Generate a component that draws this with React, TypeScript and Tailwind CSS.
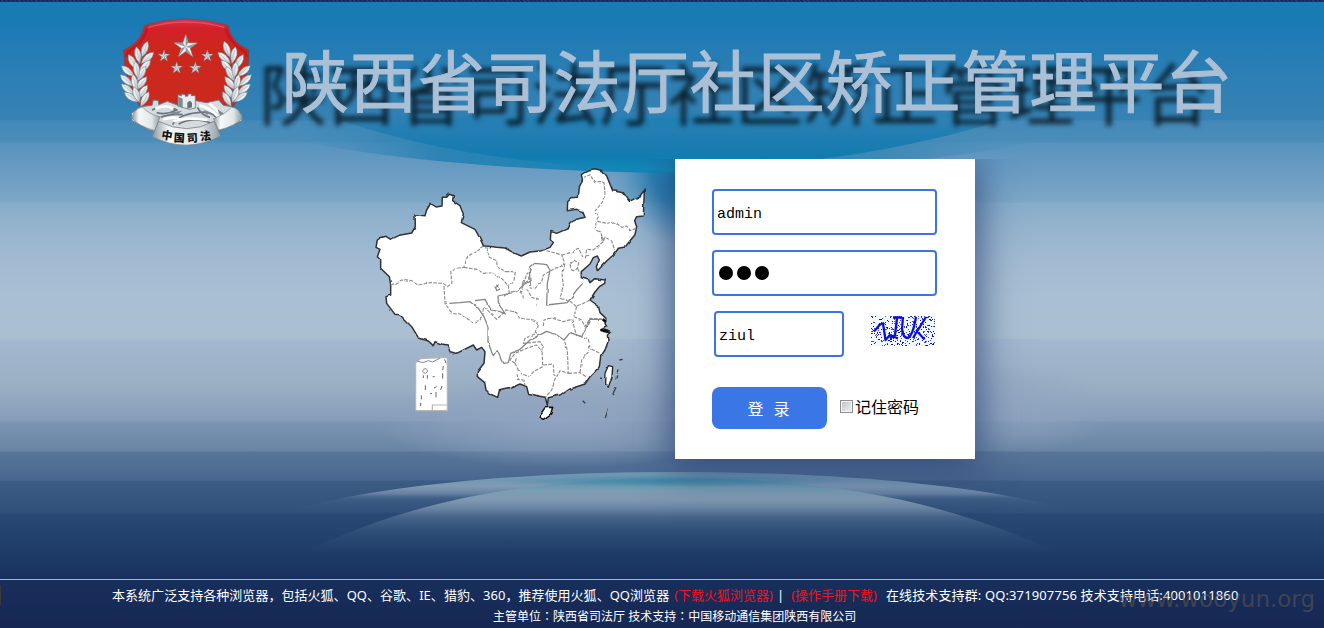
import React from "react";

const STARS = [
  { x: 227, y: 140, r: 38 },
  { x: 162, y: 168, r: 19 },
  { x: 292, y: 168, r: 19 },
  { x: 200, y: 204, r: 19 },
  { x: 256, y: 204, r: 19 },
];

function starPoints(cx: number, cy: number, r: number) {
  const pts: string[] = [];
  for (let i = 0; i < 10; i++) {
    const a = -Math.PI / 2 + (i * Math.PI) / 5;
    const rad = i % 2 ? r * 0.38 : r;
    pts.push(`${(cx + rad * Math.cos(a)).toFixed(1)},${(cy + rad * Math.sin(a)).toFixed(1)}`);
  }
  return pts.join(" ");
}

const LEAVES = [
  [104, 148, 20], [84, 166, -12], [112, 174, 48], [68, 186, -30], [104, 200, 42],
  [54, 214, -50], [94, 222, 30], [50, 242, -48], [94, 250, 40], [54, 268, -52],
  [98, 276, 35], [64, 292, -55], [104, 298, 30], [80, 210, -8], [74, 248, -12], [80, 284, -20],
];

function Wreath() {
  return (
    <g>
      <path d="M100 150 Q66 220 100 318" stroke="#5d6a74" strokeWidth="6" fill="none" />
      {LEAVES.map(([x, y, r], i) => (
        <g key={i} transform={`translate(${x} ${y}) rotate(${r})`}>
          <path d="M0 -26 Q19 -4 0 25 Q-19 -4 0 -26Z" fill="url(#silver)" stroke="#75838c" strokeWidth="1.5" />
          <path d="M0 -16 L1 18" stroke="#a3afb6" strokeWidth="1.5" />
        </g>
      ))}
    </g>
  );
}

function Emblem() {
  return (
    <svg viewBox="0 0 480 480" className="h-[160px] w-[160px] shrink-0">
      <defs>
        <linearGradient id="silver" x1="0" y1="0" x2="1" y2="1">
          <stop offset="0" stopColor="#ffffff" />
          <stop offset=".5" stopColor="#e3e8ea" />
          <stop offset="1" stopColor="#a4b0b7" />
        </linearGradient>
        <linearGradient id="band" x1="0" x2="1" y1="0" y2="0">
          <stop offset="0" stopColor="#8a969d" />
          <stop offset=".25" stopColor="#f6f8f8" />
          <stop offset=".7" stopColor="#e2e6e8" />
          <stop offset="1" stopColor="#909ca3" />
        </linearGradient>
        <linearGradient id="shield" x1="0" x2="0" y1="0" y2="1">
          <stop offset="0" stopColor="#e0354a" />
          <stop offset=".1" stopColor="#d3202b" />
          <stop offset=".3" stopColor="#cd261c" />
          <stop offset="1" stopColor="#cb2a1e" />
        </linearGradient>
      </defs>
      <path
        d="M104 76 Q228 38 354 76 Q362 126 416 150 Q418 250 370 320 L90 320 Q42 240 41 150 Q92 130 104 76Z"
        fill="url(#shield)" stroke="#66505c" strokeWidth="3"
      />
      <path d="M108 84 Q228 48 350 84" stroke="#ed6478" strokeWidth="5" fill="none" opacity=".6" />
      <path d="M112 80 Q105 125 60 152 Q52 154 50 170" stroke="#b50f28" strokeWidth="8" fill="none" opacity=".6" />
      <path d="M346 80 Q355 125 400 152 Q408 154 409 170" stroke="#b50f28" strokeWidth="8" fill="none" opacity=".6" />
      {STARS.map((s, i) => (
        <g key={i}>
          <polygon points={starPoints(s.x, s.y, s.r)} fill="#f1f4f5" stroke="#8d4f50" strokeWidth="1.5" />
          {[0, 1, 2, 3, 4].map((k) => (
            <polygon
              key={k}
              points={`${s.x},${s.y} ${s.x},${s.y - s.r} ${s.x + s.r * 0.22},${s.y - s.r * 0.31}`}
              transform={`rotate(${k * 72} ${s.x} ${s.y})`}
              fill="#8c9ba3"
            />
          ))}
        </g>
      ))}
      <Wreath />
      <g transform="translate(455 0) scale(-1 1)"><Wreath /></g>
      <path
        d="M64 340 L92 320 L126 316 L130 300 L145 302 L146 314 L172 304 L204 316 L246 300 L290 308 L326 300 L340 316 L366 320 L396 344 L396 362 L340 388 L306 396 L270 404 L170 402 L118 390 L66 362Z"
        fill="#d5dbde" stroke="#6f7c84" strokeWidth="3"
      />
      <path d="M126 330 Q165 308 200 330 Q170 346 140 338 M188 374 Q205 344 262 338 Q308 330 326 362 M206 372 Q250 348 312 372 M262 322 Q275 346 300 352 M152 352 Q180 340 218 344" stroke="#68777f" strokeWidth="5" fill="none" />
      <path d="M136 326 Q170 312 190 326 M190 364 Q220 350 292 360 M268 316 Q300 322 324 350 M298 310 L326 336 M160 358 Q190 350 206 354" stroke="#ffffff" strokeWidth="8" fill="none" />
      <path d="M176 338 L216 332 L200 346Z M282 330 L306 340 L288 344Z M322 328 L344 342 L330 346Z" fill="#7c8a92" />
      <path d="M204 284 L214 288 L214 282 L226 284 L226 289 L234 288 L234 282 L244 282 L244 287 L256 287 L256 324 L238 328 L204 318Z" fill="#e8ecee" stroke="#697780" strokeWidth="2.5" />
      <path d="M205 290 L218 296 L218 324 L205 318Z" fill="#7d8b93" />
      <path d="M232 326 L232 308 Q239 298 246 308 L246 322Z" fill="#63717a" />
      <path d="M66 354 Q74 322 98 322 Q118 344 150 350 L136 392 Q84 378 66 354Z" fill="url(#band)" stroke="#77838a" strokeWidth="2" />
      <path d="M396 354 Q388 322 364 322 Q344 344 310 356 L326 390 Q378 378 396 354Z" fill="url(#band)" stroke="#77838a" strokeWidth="2" />
      <path d="M146 364 Q230 408 312 364 L332 408 Q230 462 126 410Z" fill="url(#band)" stroke="#77838a" strokeWidth="2.5" />
      <g fontFamily="'Noto Sans CJK SC', sans-serif" fontWeight="900" fontSize="33" fill="#111" textAnchor="middle">
        <text x="171" y="418" transform="rotate(9 171 408)">中</text>
        <text x="208" y="426" transform="rotate(4 208 414)">国</text>
        <text x="247" y="426" transform="rotate(-3 247 414)">司</text>
        <text x="286" y="420" transform="rotate(-8 286 408)">法</text>
      </g>
    </svg>
  );
}

function Backdrop() {
  return (
    <svg viewBox="0 0 1324 628" className="pointer-events-none absolute inset-0 h-[628px] w-[1324px]">
      <defs>
        <linearGradient id="topOuter" x1="0" x2="1" y1="0" y2="0">
          <stop offset="0" stopColor="#3f88b8" stopOpacity="0" />
          <stop offset=".2" stopColor="#2380b2" stopOpacity=".85" />
          <stop offset=".5" stopColor="#0e86b6" />
          <stop offset=".78" stopColor="#3b88b5" stopOpacity=".9" />
          <stop offset="1" stopColor="#4d8fba" stopOpacity="0" />
        </linearGradient>
        <linearGradient id="topInner" x1="0" x2="0" y1="0" y2="1">
          <stop offset="0" stopColor="#2b7db4" stopOpacity="0" />
          <stop offset=".45" stopColor="#237eb3" />
          <stop offset=".8" stopColor="#137bb0" />
          <stop offset="1" stopColor="#0f8cba" />
        </linearGradient>
        <linearGradient id="lowOuter" gradientUnits="userSpaceOnUse" x1="0" x2="0" y1="472" y2="508">
          <stop offset="0" stopColor="#6b95b0" />
          <stop offset=".4" stopColor="#7f9ab4" />
          <stop offset=".6" stopColor="#7189a9" stopOpacity=".85" />
          <stop offset=".75" stopColor="#476890" stopOpacity=".4" />
          <stop offset="1" stopColor="#3d5c84" stopOpacity=".1" />
        </linearGradient>
        <linearGradient id="lowInner" gradientUnits="userSpaceOnUse" x1="0" x2="0" y1="478" y2="556">
          <stop offset="0" stopColor="#5493ae" />
          <stop offset=".16" stopColor="#7b9db3" />
          <stop offset=".27" stopColor="#8199b2" />
          <stop offset=".38" stopColor="#6c87a5" />
          <stop offset=".5" stopColor="#46648a" />
          <stop offset=".68" stopColor="#2f4e78" />
          <stop offset="1" stopColor="#21406b" stopOpacity="0" />
        </linearGradient>
        <radialGradient id="cyan">
          <stop offset="0" stopColor="#3f87a8" />
          <stop offset="1" stopColor="#3f87a8" stopOpacity="0" />
        </radialGradient>
        <radialGradient id="glow">
          <stop offset="0" stopColor="#0b72ac" stopOpacity="1" />
          <stop offset=".5" stopColor="#1878ae" stopOpacity=".8" />
          <stop offset="1" stopColor="#3f8cbb" stopOpacity="0" />
        </radialGradient>
        <radialGradient id="mist">
          <stop offset="0" stopColor="#93a6c3" stopOpacity=".9" />
          <stop offset=".6" stopColor="#90a4c0" stopOpacity=".5" />
          <stop offset="1" stopColor="#8ea3bf" stopOpacity="0" />
        </radialGradient>
      </defs>
      <ellipse cx="690" cy="172" rx="75" ry="75" fill="url(#glow)" />
      <path d="M283 138 Q430 169 660 173 L700 173 Q930 168 1060 136 L1000 118 L330 118Z" fill="url(#topOuter)" />
      <path d="M340 120 Q470 165 668 171 Q860 165 1003 120 L940 98 L400 98Z" fill="url(#topInner)" />
      <ellipse cx="560" cy="420" rx="190" ry="48" fill="url(#mist)" />
      <ellipse cx="1000" cy="410" rx="120" ry="44" fill="url(#mist)" opacity=".8" />
      <path d="M299 508 C400 482 540 472 670 472 C820 472 960 482 1064 508Z" fill="url(#lowOuter)" />
      <path d="M301 555 C400 502 530 478 675 478 C830 478 950 502 1058 553Z" fill="url(#lowInner)" />
      <ellipse cx="672" cy="481" rx="180" ry="6" fill="url(#cyan)" />
    </svg>
  );
}

const OUTLINE =
  "M48 262 L52 240 L62 233 L78 229 L92 238 L118 226 L155 219 L166 200 L165 164 L195 167 L200 150 L212 130 L228 141 L246 138 L247 112 L260 112 L268 103 L280 107 L278 122 L300 137 L310 162 L304 188 L345 208 L360 235 L370 257 L410 262 L435 264 L460 278 L484 288 L510 276 L545 272 L570 262 L580 248 L571 236 L573 214 L590 220 L625 205 L633 187 L650 178 L675 172 L668 155 L650 148 L622 152 L623 125 L635 113 L655 112 L658 80 L668 62 L664 44 L685 30 L705 26 L728 32 L740 48 L758 92 L790 98 L808 124 L840 108 L853 90 L850 168 L830 170 L824 182 L830 200 L825 224 L812 240 L798 258 L778 262 L760 285 L740 303 L712 333 L709 320 L718 300 L712 288 L700 293 L690 312 L664 335 L664 350 L684 356 L690 368 L704 356 L736 360 L734 370 L718 380 L705 396 L690 420 L715 438 L720 458 L738 475 L735 490 L740 500 L722 510 L752 516 L742 525 L744 545 L735 570 L722 590 L718 620 L690 650 L675 672 L650 680 L625 688 L600 705 L565 713 L562 735 L565 747 L556 712 L535 708 L505 700 L500 680 L480 672 L450 685 L418 692 L413 712 L390 702 L378 690 L374 668 L352 650 L352 635 L372 610 L375 575 L365 562 L350 570 L340 555 L290 580 L270 575 L262 555 L245 552 L225 545 L220 557 L205 543 L175 533 L155 500 L120 465 L105 463 L80 430 L78 410 L92 405 L92 378 L88 350 L62 325 L62 300 L52 290 L60 268Z";

const PROVINCES = [
  "M92 375 L108 370 L125 360 L155 365 L175 375 L210 368 L250 370 L262 380 L276 370 L272 335 L290 325 L312 322 L315 298 L345 278 L370 260",
  "M312 322 L350 328 L370 340 L400 338 L430 360 L445 378 L448 400 L432 410",
  "M380 260 L388 292 L410 302 L412 322 L440 335 L466 335 L462 362 L445 376",
  "M252 378 L255 430 L272 455 L300 462 L340 488 L360 480 L370 460",
  "M368 455 L372 440 L392 460 L410 478 L440 450 L470 458 L478 474 L520 480 L535 495",
  "M535 495 L528 520 L495 535 L490 550 L540 545 L550 562",
  "M480 400 L490 375 L500 342 L515 330 M505 350 L510 380 L525 385 L545 365 L550 345 L580 328 L606 318",
  "M545 268 L606 285 L612 310 L606 340 L610 380 L600 415 M606 285 L630 278 L655 265 L668 290 L690 285",
  "M676 295 L680 268 L700 270 L730 245 L735 232 L755 243 L764 270 M730 245 L722 216 L706 208 L708 185 L716 172 L706 152 L728 125 L735 100 L732 68 L705 68 L690 44 L672 52",
  "M712 184 L740 190 L765 186 L785 202 L800 198 L812 212 L828 205",
  "M630 310 L640 300 L656 308 L652 325 L640 332 L632 322Z M652 325 L664 345",
  "M500 385 L515 412 L535 420 L530 440 M485 390 L490 415 M600 415 L632 425 L650 440 L690 420",
  "M550 498 L552 480 L575 474 L610 485 L635 478 L642 500 L650 528",
  "M650 440 L642 470 L665 480 L675 500 L690 475 L738 478 M658 528 L685 540 L690 565 L720 580",
  "M546 560 L548 620 L520 635 L510 650 L480 640 L465 610 L470 590 M550 615 L580 612 L582 645 L592 650",
  "M614 545 L622 570 L625 640 L600 632 L585 660 L575 690 L556 712",
  "M625 640 L660 638 L678 650 M660 638 L665 600 L690 570",
  "M470 640 L475 658 L492 660 L495 676 M465 610 L450 600 L465 580 L500 565 L530 555 L546 575",
];

const RIVERS = [
  "M268 430 L300 428 L330 425 L355 445 L372 470 L384 500 L384 545 L400 590 L412 572 L428 610 L445 608 L452 580 L480 568 L510 540 L560 514 L590 525 L612 540 L630 518 L665 530 L690 478 L725 478",
  "M345 422 L375 418 L392 450 L420 455 L436 462 L415 430 L414 408 L440 402 L470 395 L490 375 L510 362 L508 325 L525 310 L560 314 L570 330 L562 370 L560 435 L622 428 L650 390 L668 370",
  "M403 382 L412 378 L418 388 L408 392Z",
];

function ChinaMap() {
  return (
    <svg viewBox="0 0 900 810" className="mt-[1px] h-[270px] w-[300px] shrink-0">
      <defs>
        <filter id="rough" x="-5%" y="-5%" width="110%" height="110%">
          <feTurbulence type="fractalNoise" baseFrequency="0.04" numOctaves="1" seed="4" />
          <feDisplacementMap in="SourceGraphic" scale="9" xChannelSelector="R" yChannelSelector="G" />
        </filter>
      </defs>
      <g filter="url(#rough)" fill="none" strokeLinejoin="round">
        <path d={OUTLINE} fill="#fff" stroke="#303336" strokeWidth="4.5" />
        {PROVINCES.map((d) => (
          <path key={d} d={d} stroke="#8c8c8c" strokeWidth="3.4" strokeDasharray="11 4" />
        ))}
        {RIVERS.map((d) => (
          <path key={d} d={d} stroke="#848484" strokeWidth="3.8" />
        ))}
        <path d="M540 765 L555 743 L578 742 L572 762 L550 778 L538 772Z" fill="#fff" stroke="#111" strokeWidth="4.5" />
        <path d="M745 617 L758 620 L756 650 L745 682 L734 670 L735 640Z" fill="#fff" stroke="#26292c" strokeWidth="4" />
        <path d="M722 510 L748 516 M728 478 L738 486" stroke="#111" strokeWidth="8" />
        <path d="M774 628 L772 640 M773 646 L771 656 M768 682 L757 706 M742 746 L733 774 M668 722 L676 730 M778 600 L788 598 M720 654 L726 656" stroke="#3b4148" strokeWidth="4" />
      </g>
      <g fill="none">
        <path d="M167 608 L182 596 L262 592 L262 752 L167 752Z" fill="#fff" stroke="#b5b5b5" strokeWidth="3.5" />
        <path d="M217 752 V735 H262" stroke="#b5b5b5" strokeWidth="3.5" />
        <path d="M172 604 Q190 612 205 602 L218 606 L240 594 M190 628 a7 7 0 1 0 8 -2 Z" stroke="#888" strokeWidth="3" />
        <path d="M254 598 L258 610 M250 618 L248 630 M248 640 V656 M190 646 V654 M202 645 V656 M218 650 h6 M196 676 V690 M246 678 L242 690 M222 684 L230 680 M210 702 L216 700 M184 706 V718 M228 696 V712 M182 728 V738" stroke="#666" strokeWidth="3" />
      </g>
    </svg>
  );
}

function noiseDots() {
  const dots: { x: number; y: number; c: string }[] = [];
  let seed = 77;
  const next = () => (seed = (seed * 16807) % 2147483647) / 2147483647;
  for (let y = 0; y < 30; y++) {
    for (let x = 0; x < 64; x++) {
      const v = next();
      if (v < 0.17) dots.push({ x, y, c: v < 0.085 ? "#15158c" : "#4a4ad0" });
    }
  }
  return dots;
}
const DOTS = noiseDots();

function Captcha() {
  return (
    <svg viewBox="0 0 64 30" className="mt-[5px] h-[30px] w-[64px] shrink-0">
      <rect width="64" height="30" fill="#eff7ff" />
      {DOTS.map((d) => (
        <rect key={`${d.x}-${d.y}`} x={d.x} y={d.y} width="1" height="1" fill={d.c} />
      ))}
      <path
        d="M3 15.500 L9 8.500 L12 7.500 L13 14 L14.500 24 L19 19 L27 22.500 M19 22.500 L24 19 L26 2 M22 1.500 H31 M32 1 L31 13 Q32 22 37 22 Q42 19 45 1 M55 1 L42 22 M45 14 L53.500 23.500"
        fill="none" stroke="#0f0fdd" strokeWidth="2.3" strokeLinejoin="round"
      />
    </svg>
  );
}

const fieldBase =
  "flex h-[46px] items-center rounded-[4px] border-2 border-[#3a76e3] bg-white font-['Liberation_Mono',monospace] text-[15px] text-black";

function Colon() {
  return <span className="font-['Noto_Sans_CJK_TC',sans-serif]" lang="zh-TW">：</span>;
}

export default function App() {
  return (
    <div className="relative h-[628px] w-[1324px] overflow-hidden bg-[linear-gradient(180deg,#1a7ab5_0px,#1b7ab4_25px,#2b7eb4_70px,#3782b4_120px,#4489b8_121px,#4a8eba_142px,#5693bd_143px,#6d9dc4_175px,#7da8c5_202px,#88adca_203px,#94b3cd_227px,#a3bbd2_263px,#aabfd4_300px,#abbfd0_338px,#a3b7cf_340px,#99adc3_390px,#859cb8_421px,#7b94b2_422px,#6885a3_451px,#587599_452px,#49668f_480px,#3d5c84_481px,#32517a_512px,#294873_514px,#21406b_543px,#172f5c_580px,#172753_628px)] font-['Noto_Sans','Noto_Sans_CJK_SC',sans-serif]">
      <Backdrop />
      <div className="relative flex h-full flex-col">
        <div className="h-[2px] shrink-0 bg-[repeating-linear-gradient(45deg,#16295c_0px,#16295c_2px,#263c78_2px,#263c78_3px)]" />
        <header className="flex h-[157px] shrink-0 pl-[110px]">
          <div className="-mt-[2px]">
            <Emblem />
          </div>
          <h1 className="ml-[12px] mt-[26px] whitespace-nowrap font-['Noto_Sans_CJK_SC',sans-serif] text-[67px] font-normal leading-[100px] tracking-[0.950px] text-[#abc0d5] [-webkit-text-stroke:1px_#abc0d5] [text-shadow:-22px_13px_5px_rgba(0,0,0,0.75)]">
            陕西省司法厅社区矫正管理平台
          </h1>
        </header>

        <main className="flex h-[420px] shrink-0 items-start overflow-hidden pl-[360px]">
          <ChinaMap />
          <form className="ml-[15px] flex h-[300px] w-[300px] shrink-0 flex-col bg-white pl-[37px] pt-[30px] shadow-[0_6px_36px_4px_rgba(45,70,120,0.85)]">
            <div className={`${fieldBase} w-[225px] pl-[3px]`}>
              <span className="mt-[6px]">admin</span>
            </div>
            <div className={`${fieldBase} mt-[15px] w-[225px] gap-[4px] pl-[5px]`}>
              <span className="h-[14px] w-[14px] rounded-full bg-black" />
              <span className="h-[14px] w-[14px] rounded-full bg-black" />
              <span className="h-[14px] w-[14px] rounded-full bg-black" />
            </div>
            <div className="mt-[15px] flex pl-[2px]">
              <div className={`${fieldBase} w-[130px] pl-[3px]`}>
                <span className="mt-[6px]">ziul</span>
              </div>
              <div className="ml-[27px]">
                <Captcha />
              </div>
            </div>
            <div className="mt-[30px] flex h-[42px] items-center">
              <button type="button" className="h-[42px] w-[115px] rounded-[8px] bg-[#3a76e6] pr-[2px] font-['Noto_Sans_CJK_SC',sans-serif] text-[16px] leading-[42px] text-white">
                <span className="mr-[10px]">登</span>
                <span>录</span>
              </button>
              <span className="-mt-[3px] ml-[13px] h-[13px] w-[13px] border border-[#8e8f8f] bg-[linear-gradient(135deg,#b9bfc9,#f4f4f4)] shadow-[inset_0_0_0_1px_#f4f4f4]" />
              <span className="-mt-[4px] ml-[2px] font-['Noto_Sans_CJK_SC',sans-serif] text-[16px] leading-[20px] text-black">记住密码</span>
            </div>
          </form>
        </main>

        <footer className="h-[49px] shrink-0 border-t border-[#9db8d8] text-white">
          <div className="flex h-[20px] items-center whitespace-nowrap pl-[112px] pt-[9px] text-[13px] leading-[20px]">
            <span className="tracking-[0.035px]">本系统广泛支持各种浏览器，包括火狐、QQ、谷歌、IE、猎豹、360，推荐使用火狐、QQ浏览器</span>
            <span className="ml-[5px] text-[#f5101c]">(下载火狐浏览器)</span>
            <span className="ml-[4px]">|</span>
            <span className="ml-[7px] text-[#f5101c]">(操作手册下载)</span>
            <span className="ml-[9px] tracking-[0.120px]">在线技术支持群: QQ:371907756 技术支持电话:4001011860</span>
          </div>
          <div className="mt-[5px] whitespace-nowrap pl-[493px] text-[12px] leading-[22px]">
            主管单位<Colon />陕西省司法厅 技术支持<Colon />中国移动通信集团陕西有限公司
          </div>
        </footer>
      </div>
      <div className="absolute right-[9px] top-[584px] font-['DejaVu_Sans',sans-serif] text-[23px] leading-[30px] text-[#6a5b4c]/50">www.wooyun.org</div>
      <div className="absolute left-0 top-[585px] h-[20px] w-px bg-[#3a3a3a]" />
    </div>
  );
}
